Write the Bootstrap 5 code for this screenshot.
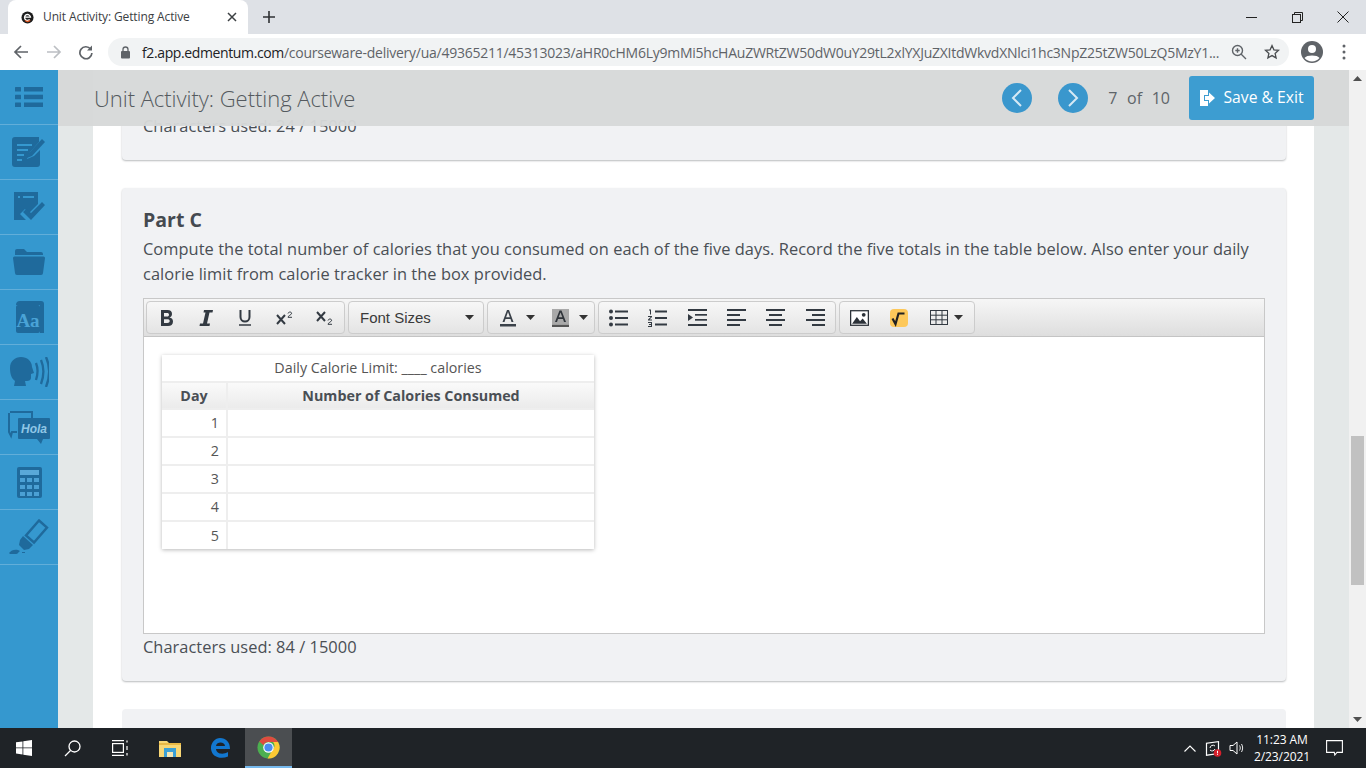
<!DOCTYPE html>
<html lang="en">
<head>
<meta charset="utf-8">
<title>Unit Activity: Getting Active</title>
<link href="https://cdn.jsdelivr.net/npm/bootstrap@5.3.0/dist/css/bootstrap.min.css" rel="stylesheet">
<style>
html,body{height:100%;margin:0;overflow:hidden;background:#fff;font-family:"Open Sans","Liberation Sans",sans-serif;color:#4a4f55}
.shell{width:1366px;height:768px}
.tabstrip{height:34px;background:#dee1e6;font-family:"Open Sans",sans-serif}
.chrometab{width:240px;height:34px;margin-left:8px;background:#fff;border-radius:8px 8px 0 0;padding:0 11px 0 13px;font-size:12px;color:#3c4043;letter-spacing:-.12px}
.tabtitle{margin-left:9px}
.newtab{margin-left:14px}
.winctl{width:46px;height:34px}
.addrbar{height:36px;background:#fff;padding-left:12px}
.navico{width:20px;margin-right:12px}
.omni{width:1181px;height:28px;background:#f1f3f4;border-radius:14px;padding:0 9px 0 12px;font-size:14px;color:#5f6368;letter-spacing:-.25px;white-space:nowrap}
.omni b{font-weight:400;color:#202124;letter-spacing:-.38px}
.urltext{margin-left:11px;flex:1}
.starico{margin-left:1px}
.avatarico{margin-left:11px}
.dotsico{margin-left:18px}
.stage{height:658px;position:relative;overflow:hidden}
.railnav{width:58px;background:#3598cf;flex:none}
.railcell{height:55px;border-bottom:1px solid #62aed9}
.gutter{width:35px;background:#e4e8e8;flex:none}
.pagefill{width:1221px;background:#fff;flex:none;padding:0 28px}
.gutter2{width:35px;background:#e4e8e8;flex:none}
.vscroll{width:17px;background:#f1f1f1;flex:none}
.vbtn{height:17px}
.vthumb{height:149px;margin:349px 2px 0;background:#c1c1c1;width:13px}
.sheet{background:#f1f2f4;border-radius:4px;box-shadow:0 1px 2px #b9bbbd;width:1164px;margin-left:1px}
.sheet-a{height:90px;padding:44px 21px 0;border-radius:0 0 4px 4px}
.sheet-c{height:493px;margin-top:28px;padding:20px 21px 0}
.sheet-d{height:40px;margin-top:28px;box-shadow:none}
.counter{font-size:16.4px;line-height:24px;color:#4a4f55;letter-spacing:.03px}
.parttitle{font-size:19.5px;font-weight:700;line-height:24px;margin:0;color:#454a50}
.prompt{font-size:16.4px;line-height:25px;margin:4px 0 12px;color:#4a4f55;letter-spacing:.05px}
.editor{width:1122px;height:336px;border:1px solid #c8c8c8;background:#fff}
.tbar{height:38px;background:linear-gradient(#f6f6f6,#dedede);border-bottom:1px solid #c4c4c4;padding:2px 0 0 2px;gap:3px}
.tgroup{height:33px;border:1px solid #ccc;border-radius:4px;background:linear-gradient(#f7f7f7,#e4e4e4)}
.tgroup-first{width:199px}
.tb{width:39.3px;height:31px}
.tgroup-first .tb{width:39.4px}
.fontpick{width:136px;padding:0 9px 0 11px;font:15px "Liberation Sans",sans-serif;color:#3a3a3a}
.splitfore{width:54px;gap:10px;padding-left:5px}
.splitback{width:52px;gap:10px;padding-left:3px}
.splitgrid{width:56px;gap:6px}
.editbody{padding:18px}
.calgrid{width:432px;border-collapse:collapse;box-shadow:0 1px 4px rgba(0,0,0,.28);font-size:14.3px;color:#555;line-height:20px;background:#fff}
.calgrid td,.calgrid th{border:2px solid #eee;height:28px;padding:0 7px}
.calgrid tr>*:first-child{border-left:0}
.calgrid tr>*:last-child{border-right:0}
.calgrid tr:last-child>*{border-bottom:0}
.calgrid .capcell{text-align:center;background:#fff;height:27px;border-top:0}
.calgrid th{background:linear-gradient(#fafafa,#ebebeb);text-align:center;color:#4a4f55;font-weight:700;height:27px}
.calgrid td.daynum{text-align:right;width:65px}
.counter-c{margin-top:1px}
.topcover{position:absolute;left:58px;top:0;width:1291px;height:56px;background:rgba(214,217,217,.96);padding:0 35px 0 36px}
.unitname{font-size:22px;font-weight:300;color:#555a5f;letter-spacing:-.04px}
.roundnav{width:30px;height:30px;border-radius:50%;background:#3a97cd}
.navnext{margin-left:26px}
.pagecount{font-size:16px;color:#5e6469;margin:0 19px 0 20px;word-spacing:5.500px}
.saveexit{width:125px;height:44px;border-radius:3px;background:#3d9dd1;color:#fff;border:0;font-size:15.7px;padding:0}
.saveexit:hover{background:#3d9dd1;color:#fff}
.taskbar{height:40px;background:#1f2327;color:#fff}
.taskbtn{width:48px;height:40px}
.taskfolder{margin-left:2px}
.taskedge{margin-left:2px}
.taskbtn-on{background:#4b4e51;border-bottom:2px solid #76b9ed;width:47px;margin-left:1px}
.traycaret{margin-right:9px}
.traynet{margin-right:7px}
.traysound{margin-right:7px}
.clockbox{font:12px/17px "Open Sans",sans-serif;width:60px;text-align:center;color:#fff;letter-spacing:-.1px}
.traynote{width:44px;margin-right:10px}
</style>
</head>
<body>
<div class="shell d-flex flex-column">

  <div class="tabstrip d-flex align-items-center">
    <div class="chrometab d-flex align-items-center">
      <svg width="13" height="13" viewBox="0 0 14 14"><circle cx="7" cy="7" r="6.500" fill="#1c1c1c"/><path d="M3.800 6.600h6.400a3.200 3.200 0 1 0-.9 2.600" stroke="#fff" stroke-width="1.400" fill="none"/><path d="M9.800 10a3.600 3.600 0 0 1-5.400.1" stroke="#d9541e" stroke-width="1.500" fill="none"/></svg>
      <span class="tabtitle flex-grow-1">Unit Activity: Getting Active</span>
      <svg width="10" height="10" viewBox="0 0 10 10"><path d="M1 1l8 8M9 1l-8 8" stroke="#3c4043" stroke-width="1.500"/></svg>
    </div>
    <svg class="newtab" width="14" height="14" viewBox="0 0 14 14"><path d="M7 1v12M1 7h12" stroke="#2f3134" stroke-width="1.600"/></svg>
    <div class="ms-auto d-flex">
      <div class="winctl d-flex align-items-center justify-content-center"><svg width="11" height="11" viewBox="0 0 11 11"><path d="M0 5.500h11" stroke="#222" stroke-width="1"/></svg></div>
      <div class="winctl d-flex align-items-center justify-content-center"><svg width="11" height="11" viewBox="0 0 11 11" fill="none" stroke="#222"><rect x=".5" y="2.500" width="8" height="8"/><path d="M2.500 2.500v-2h8v8h-2"/></svg></div>
      <div class="winctl d-flex align-items-center justify-content-center"><svg width="12" height="12" viewBox="0 0 12 12"><path d="M.5.500l11 11M11.500.5l-11 11" stroke="#222"/></svg></div>
    </div>
  </div>

  <div class="addrbar d-flex align-items-center">
    <svg class="navico" width="20" height="16" viewBox="0 0 20 16" fill="none" stroke="#5f6368" stroke-width="1.700"><path d="M16 8H3M9 2L3 8l6 6"/></svg>
    <svg class="navico" width="20" height="16" viewBox="0 0 20 16" fill="none" stroke="#bcbfc3" stroke-width="1.700"><path d="M3 8h13M10 2l6 6-6 6"/></svg>
    <svg class="navico" width="20" height="16" viewBox="0 0 20 16" fill="none"><path d="M14.600 5A6 6 0 1 0 15.900 9" stroke="#5f6368" stroke-width="1.700"/><path d="M16 1.500v5h-5z" fill="#5f6368"/></svg>
    <div class="omni d-flex align-items-center">
      <svg width="11" height="13" viewBox="0 0 11 13"><rect x="1" y="5" width="9" height="7.500" rx="1" fill="#5f6368"/><path d="M3 5V3.500a2.500 2.500 0 0 1 5 0V5" fill="none" stroke="#5f6368" stroke-width="1.300"/></svg>
      <span class="urltext"><b>f2.app.edmentum.com</b>/courseware-delivery/ua/49365211/45313023/aHR0cHM6Ly9mMi5hcHAuZWRtZW50dW0uY29tL2xlYXJuZXItdWkvdXNlci1hc3NpZ25tZW50LzQ5MzY1...</span>
      <svg class="me-3" width="16" height="16" viewBox="0 0 16 16" fill="none" stroke="#5f6368" stroke-width="1.400"><circle cx="6.500" cy="6.500" r="5"/><path d="M10 10l5 5M4.300 6.500h4.400M6.500 4.300v4.400"/></svg>
      <svg class="starico" width="16" height="16" viewBox="0 0 16 16" fill="none" stroke="#4a4d50" stroke-width="1.300"><path d="M8 1.600l1.900 4.200 4.600.5-3.400 3.100 1 4.500L8 11.600l-4.100 2.300 1-4.500L1.500 6.300l4.600-.5z"/></svg>
    </div>
    <svg class="avatarico" width="24" height="24" viewBox="0 0 24 24"><circle cx="12" cy="12" r="11" fill="#5f6368"/><circle cx="12" cy="9" r="4" fill="#fff"/><path d="M4.500 18c2-3.300 13-3.300 15 0a10 10 0 0 1-15 0z" fill="#fff"/></svg>
    <svg class="dotsico" width="4" height="16" viewBox="0 0 4 16" fill="#5f6368"><circle cx="2" cy="2" r="1.500"/><circle cx="2" cy="8" r="1.500"/><circle cx="2" cy="14" r="1.500"/></svg>
  </div>

  <div class="stage d-flex">
    <nav class="railnav d-flex flex-column">
      <div class="railcell d-flex align-items-center justify-content-center"><svg width="28" height="20" viewBox="0 0 28 20" fill="#1f6a9c"><rect width="6" height="4.500" rx=".5"/><rect x="9" width="19" height="4.500"/><rect y="7.700" width="6" height="4.500" rx=".5"/><rect x="9" y="7.700" width="19" height="4.500"/><rect y="15.500" width="6" height="4.500" rx=".5"/><rect x="9" y="15.500" width="19" height="4.500"/></svg></div>
      <div class="railcell d-flex align-items-center justify-content-center"><svg width="34" height="32" viewBox="0 0 34 32"><path d="M3 1h24v5l-9 10-3 7 7-3 6-6v14a3 3 0 0 1-3 3H3a3 3 0 0 1-3-3V4a3 3 0 0 1 3-3z" fill="#1f6a9c"/><path d="M5 9h15M5 14h11M5 19h7M5 24h5" stroke="#3598cf" stroke-width="2"/><path d="M30 3l3 3-13 14-5 2 2-5z" fill="#1f6a9c"/></svg></div>
      <div class="railcell d-flex align-items-center justify-content-center"><svg width="32" height="30" viewBox="0 0 32 30"><path d="M1 0h24v12l-9 9-4-4-5 5 6 6H1z" fill="#1f6a9c"/><path d="M5 5h2M10 5h11" stroke="#3598cf" stroke-width="2"/><path d="M10 20l8 8 14-15-3-3-11 11-5-4z" fill="#1f6a9c"/></svg></div>
      <div class="railcell d-flex align-items-center justify-content-center"><svg width="32" height="26" viewBox="0 0 32 26" fill="#1f6a9c"><path d="M2 4V2a2 2 0 0 1 2-2h7l3 3h14a2 2 0 0 1 2 2v1H2z"/><path d="M0 9a1.500 1.500 0 0 1 1.500-1.500h29A1.500 1.500 0 0 1 32 9l-2 15a2 2 0 0 1-2 2H4a2 2 0 0 1-2-2z"/></svg></div>
      <div class="railcell d-flex align-items-center justify-content-center"><svg width="32" height="32" viewBox="0 0 32 32"><path d="M3 4a4 4 0 0 1 4-4h21a3 3 0 0 1 3 3v29h-4V4H8a2 2 0 0 0-1 0z" fill="#1f6a9c"/><rect x="3" y="4" width="24" height="28" rx="2" fill="#1f6a9c"/><text x="15" y="26" text-anchor="middle" font-family="Liberation Serif" font-size="19" font-weight="700" fill="#4aa3d6">Aa</text></svg></div>
      <div class="railcell d-flex align-items-center justify-content-center"><svg width="39" height="30" viewBox="0 0 39 30"><path d="M11 0c6 0 11 4 11 10l2 6-3 1v4c0 2-2 3-4 3h-2l1 5H4l1-5C1 21 0 16 0 11 0 4 5 0 11 0z" fill="#1f6a9c"/><path d="M26 6c2 5 2 11 0 17M31 3c3 7 3 16 0 24M36 0c4 9 4 20 0 30" fill="none" stroke="#1f6a9c" stroke-width="2.300"/></svg></div>
      <div class="railcell d-flex align-items-center justify-content-center"><svg width="44" height="34" viewBox="0 0 44 34"><path d="M3 2h22v7M10 22H5l-1 4-2-4V3" fill="none" stroke="#1f6a9c" stroke-width="2"/><path d="M12 8h30a1 1 0 0 1 1 1v19a1 1 0 0 1-1 1h-6l-2 5-4-5H12a1 1 0 0 1-1-1V9a1 1 0 0 1 1-1z" fill="#1f6a9c"/><text x="27" y="23" text-anchor="middle" font-family="Liberation Sans" font-size="12" font-style="italic" font-weight="700" fill="#8fc6e6">Hola</text></svg></div>
      <div class="railcell d-flex align-items-center justify-content-center"><svg width="25" height="31" viewBox="0 0 25 31"><rect width="25" height="31" rx="2" fill="#1f6a9c"/><rect x="3" y="3" width="19" height="5" fill="#59a8d8"/><g fill="#4ba0d4"><rect x="3" y="11" width="5" height="4"/><rect x="10" y="11" width="5" height="4"/><rect x="17" y="11" width="5" height="4"/><rect x="3" y="18" width="5" height="4"/><rect x="10" y="18" width="5" height="4"/><rect x="17" y="18" width="5" height="4"/><rect x="3" y="25" width="5" height="4"/><rect x="10" y="25" width="5" height="4"/><rect x="17" y="25" width="5" height="4"/></g></svg></div>
      <div class="railcell d-flex align-items-center justify-content-center"><svg width="40" height="36" viewBox="0 0 40 36"><path d="M30 1.500l8 7-13 15-8-7z" fill="none" stroke="#1f6a9c" stroke-width="2.400"/><path d="M14 17l10 9-4 4-5 1-5-5 1-5z" fill="#1f6a9c"/><path d="M0 34c2-3 6-4 9-3l2 1c-2 1-2 3-4 3H1zM13 33l3 0v1h-3z" fill="#1f6a9c"/></svg></div>
    </nav>
    <div class="gutter"></div>
    <main class="pagefill">
      <section class="sheet sheet-a">
        <div class="counter">Characters used: 24 / 15000</div>
      </section>
      <section class="sheet sheet-c">
        <h2 class="parttitle">Part C</h2>
        <p class="prompt">Compute the total number of calories that you consumed on each of the five days. Record the five totals in the table below. Also enter your daily calorie limit from calorie tracker in the box provided.</p>
        <div class="editor">
          <div class="tbar d-flex">
            <div class="tgroup tgroup-first d-flex">
              <div class="tb d-flex align-items-center justify-content-center"><svg width="16" height="18" viewBox="0 0 16 18"><path d="M2 1h6.500c3 0 4.500 1.500 4.500 4 0 1.700-1 3-2.500 3.400C12.700 8.800 14 10.300 14 12.500c0 3-2 4.500-5 4.500H2zm3 3v3.500h3c1.300 0 2-.7 2-1.800S9.300 4 8 4zm0 6.300V14h3.300c1.500 0 2.400-.7 2.400-1.900s-.9-1.800-2.400-1.800z" fill="#333a42" fill-rule="evenodd"/></svg></div>
              <div class="tb d-flex align-items-center justify-content-center"><svg width="16" height="18" viewBox="0 0 16 18"><path d="M6 1h9l-.5 2.400h-3L9 14.600h3L11.500 17h-10l.5-2.400h3L7.500 3.400h-2z" fill="#333a42"/></svg></div>
              <div class="tb d-flex align-items-center justify-content-center"><svg width="14" height="17" viewBox="0 0 14 17" fill="none" stroke="#333a42" stroke-width="2"><path d="M2.500 1v7a4.500 4.500 0 0 0 9 0V1"/><path d="M1 16h12" stroke-width="1.500"/></svg></div>
              <div class="tb d-flex align-items-center justify-content-center"><svg width="17" height="14" viewBox="0 0 17 14" fill="none" stroke="#333a42"><path d="M1 4l8 9M9 4l-8 9" stroke-width="2"/><path d="M12 2.500c.5-2 4-2 3.500.3-.3 1-3.500 2-3.500 3.500h4" stroke-width="1"/></svg></div>
              <div class="tb d-flex align-items-center justify-content-center"><svg width="17" height="14" viewBox="0 0 17 14" fill="none" stroke="#333a42"><path d="M1 1l8 9M9 1l-8 9" stroke-width="2"/><path d="M12 9.500c.5-2 4-2 3.500.3-.3 1-3.500 2-3.500 3.500h4" stroke-width="1"/></svg></div>
            </div>
            <div class="tgroup fontpick d-flex align-items-center justify-content-between"><span>Font Sizes</span><svg width="9" height="5" viewBox="0 0 9 5"><path d="M0 0h9L4.500 5z" fill="#333"/></svg></div>
            <div class="tgroup d-flex align-items-center">
              <div class="tb splitfore d-flex align-items-center justify-content-center"><svg width="16" height="18" viewBox="0 0 16 18"><path d="M2.500 13L7 1h2l4.500 12h-2l-1-3h-5l-1 3zm3.600-4.800h3.800L8 3z" fill="#3a4149" fill-rule="evenodd"/><rect y="15" width="16" height="2.500" fill="#3a4149"/></svg><svg width="9" height="5" viewBox="0 0 9 5"><path d="M0 0h9L4.500 5z" fill="#333"/></svg></div>
              <div class="tb splitback d-flex align-items-center justify-content-center"><svg width="17" height="18" viewBox="0 0 17 18"><rect width="17" height="15" fill="#a9a9a9"/><path d="M3 13L7.500 1.500h2L14 13h-2l-1-3H6l-1 3zm3.600-4.800h3.800L8.500 3.500z" fill="#2f343a" fill-rule="evenodd"/><rect y="15.500" width="17" height="2.500" fill="#555"/></svg><svg width="9" height="5" viewBox="0 0 9 5"><path d="M0 0h9L4.500 5z" fill="#333"/></svg></div>
            </div>
            <div class="tgroup d-flex">
              <div class="tb d-flex align-items-center justify-content-center"><svg width="19" height="18" viewBox="0 0 19 18" fill="#333a42"><circle cx="2" cy="2.500" r="2"/><circle cx="2" cy="9" r="2"/><circle cx="2" cy="15.500" r="2"/><rect x="6" y="1.500" width="13" height="2"/><rect x="6" y="8" width="13" height="2"/><rect x="6" y="14.500" width="13" height="2"/></svg></div>
              <div class="tb d-flex align-items-center justify-content-center"><svg width="19" height="18" viewBox="0 0 19 18" fill="#333a42"><rect x="7" y="1.500" width="12" height="2"/><rect x="7" y="8" width="12" height="2"/><rect x="7" y="14.500" width="12" height="2"/><path d="M1 .5h2v5H2V1.500H1zM0 7h4v1L1.500 10.500H4V11.500H0v-1L2.700 8H0zM0 13h4v5H0v-1h3v-1H1v-1h2v-1H0z"/></svg></div>
              <div class="tb d-flex align-items-center justify-content-center"><svg width="19" height="17" viewBox="0 0 19 17" fill="#333a42"><rect width="19" height="2"/><rect x="7" y="5" width="12" height="1.700"/><rect x="7" y="10" width="12" height="1.700"/><rect y="15" width="19" height="2"/><path d="M0 5l5 3.400L0 12z"/></svg></div>
              <div class="tb d-flex align-items-center justify-content-center"><svg width="19" height="17" viewBox="0 0 19 17" fill="#333a42"><rect width="19" height="2"/><rect y="5" width="13" height="2"/><rect y="10" width="19" height="2"/><rect y="15" width="13" height="2"/></svg></div>
              <div class="tb d-flex align-items-center justify-content-center"><svg width="19" height="17" viewBox="0 0 19 17" fill="#333a42"><rect width="19" height="2"/><rect x="3" y="5" width="13" height="2"/><rect y="10" width="19" height="2"/><rect x="3" y="15" width="13" height="2"/></svg></div>
              <div class="tb d-flex align-items-center justify-content-center"><svg width="19" height="17" viewBox="0 0 19 17" fill="#333a42"><rect width="19" height="2"/><rect x="6" y="5" width="13" height="2"/><rect y="10" width="19" height="2"/><rect x="6" y="15" width="13" height="2"/></svg></div>
            </div>
            <div class="tgroup d-flex">
              <div class="tb d-flex align-items-center justify-content-center"><svg width="19" height="16" viewBox="0 0 18 15"><rect x=".6" y=".6" width="16.800" height="13.800" fill="#fff" stroke="#2b3138" stroke-width="1.200"/><path d="M2 13l4.500-6.500 3 4L12 8l4 5z" fill="#2b3138"/><circle cx="13" cy="4.500" r="1.800" fill="#2b3138"/></svg></div>
              <div class="tb d-flex align-items-center justify-content-center"><svg width="18" height="18" viewBox="0 0 18 18"><rect width="18" height="18" rx="4" fill="#fdc85a"/><path d="M2.500 9.500l3 5.500 3-10.500h6" fill="none" stroke="#222" stroke-width="2.200"/></svg></div>
              <div class="tb splitgrid d-flex align-items-center justify-content-center"><svg width="18" height="15" viewBox="0 0 18 15" fill="none" stroke="#333a42"><rect x=".5" y=".5" width="17" height="14"/><path d="M6 .5v14M12 .5v14M.5 5.200h17M.5 9.800h17"/></svg><svg width="9" height="5" viewBox="0 0 9 5"><path d="M0 0h9L4.500 5z" fill="#333"/></svg></div>
            </div>
          </div>
          <div class="editbody">
            <table class="calgrid">
              <tbody>
                <tr><td class="capcell" colspan="2">Daily Calorie Limit: ____ calories</td></tr>
                <tr><th>Day</th><th>Number of Calories Consumed</th></tr>
                <tr><td class="daynum">1</td><td></td></tr>
                <tr><td class="daynum">2</td><td></td></tr>
                <tr><td class="daynum">3</td><td></td></tr>
                <tr><td class="daynum">4</td><td></td></tr>
                <tr><td class="daynum">5</td><td></td></tr>
              </tbody>
            </table>
          </div>
        </div>
        <div class="counter counter-c">Characters used: 84 / 15000</div>
      </section>
      <section class="sheet sheet-d"></section>
    </main>
    <div class="gutter2"></div>
    <div class="vscroll d-flex flex-column">
      <div class="vbtn d-flex align-items-center justify-content-center"><svg width="9" height="5" viewBox="0 0 9 5"><path d="M0 5h9L4.500 0z" fill="#505050"/></svg></div>
      <div class="vthumb"></div>
      <div class="vbtn mt-auto d-flex align-items-center justify-content-center"><svg width="9" height="5" viewBox="0 0 9 5"><path d="M0 0h9L4.500 5z" fill="#505050"/></svg></div>
    </div>
    <header class="topcover d-flex align-items-center">
      <div class="unitname flex-grow-1">Unit Activity: Getting Active</div>
      <div class="roundnav d-flex align-items-center justify-content-center"><svg width="12" height="18" viewBox="0 0 12 18" fill="none" stroke="#d5e9f5" stroke-width="2"><path d="M10 1L2 9l8 8"/></svg></div>
      <div class="roundnav navnext d-flex align-items-center justify-content-center"><svg width="12" height="18" viewBox="0 0 12 18" fill="none" stroke="#d5e9f5" stroke-width="2"><path d="M2 1l8 8-8 8"/></svg></div>
      <div class="pagecount">7 of 10</div>
      <button type="button" class="btn saveexit d-flex align-items-center justify-content-center gap-2"><svg width="16" height="16" viewBox="0 0 16 16" fill="#fff"><path d="M1 0h8v5H5v6h4v5H1z"/><path d="M6 6h4V2.500L16 8l-6 5.500V10H6z"/></svg>Save &amp; Exit</button>
    </header>
  </div>

  <footer class="taskbar d-flex align-items-center">
    <div class="taskbtn d-flex align-items-center justify-content-center"><svg width="16" height="16" viewBox="0 0 16 16" fill="#fff"><path d="M0 2.300l6.500-.9v6.100H0zM7.300 1.300L16 0v7.500H7.300zM0 8.300h6.500v6.200L0 13.600zM7.300 8.300H16V16l-8.700-1.300z"/></svg></div>
    <div class="taskbtn d-flex align-items-center justify-content-center"><svg width="17" height="17" viewBox="0 0 17 17" fill="none" stroke="#fff" stroke-width="1.300"><circle cx="10.500" cy="6.500" r="5.500"/><path d="M6.500 10.500L1 16"/></svg></div>
    <div class="taskbtn d-flex align-items-center justify-content-center"><svg width="17" height="16" viewBox="0 0 17 16" fill="none" stroke="#fff" stroke-width="1.200"><rect x=".6" y="3.600" width="10.800" height="8.800"/><path d="M0 .6h12M0 15.400h12M15 .5v2M15 6v4M15 13v2.500"/></svg></div>
    <div class="taskbtn taskfolder d-flex align-items-center justify-content-center"><svg width="22" height="18" viewBox="0 0 22 18"><path d="M0 2h8l2 2h12v14H0z" fill="#f8d775"/><path d="M0 4h22v2H0z" fill="#e8b845"/><rect x="5" y="9" width="12" height="9" fill="#3ba0d5"/><rect x="8" y="13" width="6" height="5" fill="#f3e6b5"/></svg></div>
    <div class="taskbtn taskedge d-flex align-items-center justify-content-center"><svg width="20" height="20" viewBox="0 0 20 20"><path d="M10 0c6 0 10 4 10 11H6c.3 5 7 6 12 3v4.500c-7 3-16 1-17-7.500C.5 5 5 0 10 0zm-4 8h9c0-4-8-5-9 0z" fill="#1277cf" fill-rule="evenodd"/></svg></div>
    <div class="taskbtn taskbtn-on d-flex align-items-center justify-content-center"><svg width="23" height="23" viewBox="0 0 24 24"><circle cx="12" cy="12" r="11.500" fill="#4caf50"/><path d="M12 .5a11.500 11.500 0 0 1 10 5.800H12a5.700 5.700 0 0 0-5.200 3.300L2.400 5.700A11.500 11.500 0 0 1 12 .5z" fill="#de4b3f"/><path d="M22 6.300A11.500 11.500 0 0 1 11 23.500l5-8.800A5.700 5.700 0 0 0 16.800 6.300z" fill="#fcc934"/><circle cx="12" cy="12" r="5.500" fill="#fff"/><circle cx="12" cy="12" r="4.300" fill="#4a8cf0"/></svg></div>
    <div class="ms-auto d-flex align-items-center">
      <svg class="traycaret" width="12" height="7" viewBox="0 0 12 7" fill="none" stroke="#fff" stroke-width="1.100"><path d="M.5 6.500L6 1l5.500 5.500"/></svg>
      <svg class="traynet" width="17" height="17" viewBox="0 0 17 17"><rect x="1.500" y="2" width="12" height="12" fill="none" stroke="#fff" stroke-width="1.200" transform="skewY(-8) translate(0 1.500)"/><path d="M5 8a3 3 0 0 1 5-2M10 9a3 3 0 0 1-5 1" stroke="#fff" fill="none"/><circle cx="12.500" cy="13" r="3.800" fill="#d6202c"/><path d="M12.500 10.800v2.600M12.500 14.200v.8" stroke="#fff"/></svg>
      <svg class="traysound" width="16" height="14" viewBox="0 0 16 14" fill="none" stroke="#fff"><path d="M1 4.500h3L8 1v12L4 9.500H1z"/><path d="M10.500 4.500c1 1.500 1 3.500 0 5M12.500 3c1.500 2.500 1.500 5.500 0 8" stroke-width=".9"/></svg>
      <div class="clockbox">11:23 AM<br>2/23/2021</div>
      <div class="traynote d-flex align-items-center justify-content-center"><svg width="17" height="16" viewBox="0 0 17 16" fill="none" stroke="#fff" stroke-width="1.100"><path d="M.6.600h15.800v11.800H11L8.800 15l-.5-2.600H.6z"/></svg></div>
    </div>
  </footer>
</div>
<script src="https://cdn.jsdelivr.net/npm/bootstrap@5.3.0/dist/js/bootstrap.bundle.min.js"></script>
</body>
</html>
